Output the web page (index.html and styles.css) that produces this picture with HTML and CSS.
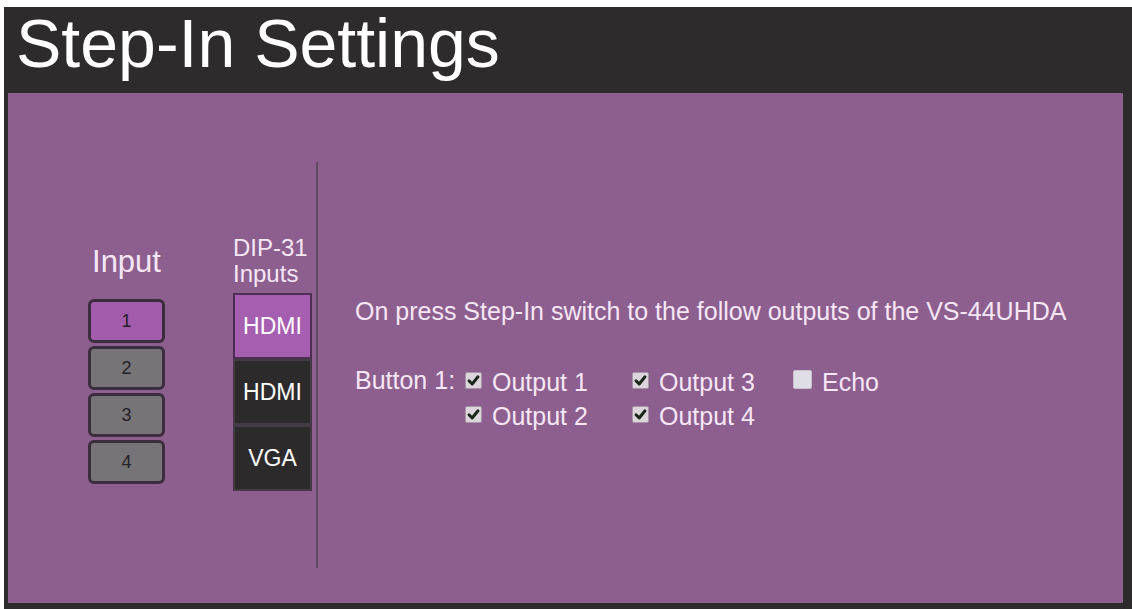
FILE: index.html
```html
<!DOCTYPE html>
<html>
<head>
<meta charset="utf-8">
<title>Step-In Settings</title>
<link rel="stylesheet" href="styles.css">
</head>
<body>
<div class="frame">
  <header class="title">Step-In Settings</header>
  <main class="panel">
    <div class="input-col">
      <div class="input-label">Input</div>
      <div class="in-btn active">1</div>
      <div class="in-btn">2</div>
      <div class="in-btn">3</div>
      <div class="in-btn">4</div>
    </div>
    <div class="dip-col">
      <div class="dip-label">DIP-31<br>Inputs</div>
      <div class="dip-box active">HDMI</div>
      <div class="dip-box">HDMI</div>
      <div class="dip-box">VGA</div>
    </div>
    <div class="divider"></div>
    <div class="content">
      <p class="desc">On press Step-In switch to the follow outputs of the VS-44UHDA</p>
      <div class="opts">
        <span class="blabel">Button 1:</span>
        <span class="opt"><span class="cb"><svg viewBox="0 0 17 17" width="17" height="17"><path d="M4 8.8 L7.2 12 L13 4.8" fill="none" stroke="#1b261c" stroke-width="3" stroke-linecap="round" stroke-linejoin="round"/></svg></span>Output 1</span>
        <span class="opt"><span class="cb"><svg viewBox="0 0 17 17" width="17" height="17"><path d="M4 8.8 L7.2 12 L13 4.8" fill="none" stroke="#1b261c" stroke-width="3" stroke-linecap="round" stroke-linejoin="round"/></svg></span>Output 3</span>
        <span class="opt"><span class="cb empty"></span>Echo</span>
        <span class="blabel"></span>
        <span class="opt"><span class="cb"><svg viewBox="0 0 17 17" width="17" height="17"><path d="M4 8.8 L7.2 12 L13 4.8" fill="none" stroke="#1b261c" stroke-width="3" stroke-linecap="round" stroke-linejoin="round"/></svg></span>Output 2</span>
        <span class="opt"><span class="cb"><svg viewBox="0 0 17 17" width="17" height="17"><path d="M4 8.8 L7.2 12 L13 4.8" fill="none" stroke="#1b261c" stroke-width="3" stroke-linecap="round" stroke-linejoin="round"/></svg></span>Output 4</span>
        <span class="opt"></span>
      </div>
    </div>
  </main>
</div>
</body>
</html>
```

FILE: styles.css
```css
html, body {
  margin: 0;
  padding: 0;
  background: #ffffff;
}

body {
  font-family: "Liberation Sans", Arial, sans-serif;
}

.frame {
  margin: 7px 0 0 4px;
  width: 1128px;
  height: 602px;
  box-sizing: border-box;
  background: #2e2b2c;
  padding: 0 9px 6px 4px;
  display: flex;
  flex-direction: column;
}

.title {
  height: 86px;
  box-sizing: border-box;
  padding: 0 0 14px 8px;
  font-size: 68px;
  line-height: 72px;
  color: #ffffff;
  white-space: nowrap;
}

.panel {
  flex: 1;
  background: #8c5f8e;
  display: flex;
  align-items: flex-start;
  padding-left: 80px;
  color: #f6e6f6;
}

.input-col {
  width: 77px;
  margin-top: 152px;
  display: flex;
  flex-direction: column;
  align-items: stretch;
  gap: 3px;
}

.input-label {
  font-size: 31px;
  line-height: 34px;
  text-align: center;
  margin-bottom: 17px;
  white-space: nowrap;
}

.in-btn {
  height: 44px;
  box-sizing: border-box;
  border: 3px solid #3b2d3d;
  border-radius: 6px;
  background: #767476;
  color: #26202a;
  font-size: 18px;
  display: flex;
  align-items: center;
  justify-content: center;
}

.in-btn.active {
  background: #a35bab;
}

.dip-col {
  width: 79px;
  margin-left: 68px;
  margin-top: 142px;
  display: flex;
  flex-direction: column;
}

.dip-label {
  font-size: 24px;
  line-height: 26px;
  margin-bottom: 6px;
  white-space: nowrap;
}

.dip-box {
  height: 66px;
  box-sizing: border-box;
  background: #2c2a2b;
  border: 2px solid #433a45;
  color: #ffffff;
  font-size: 23px;
  display: flex;
  align-items: center;
  justify-content: center;
}

.dip-box.active {
  background: #a65eb0;
  border-color: #4e2f53;
}

.divider {
  width: 2px;
  height: 406px;
  margin-top: 69px;
  margin-left: 4px;
  background: #5e4862;
}

.content {
  margin-left: 37px;
  margin-top: 204px;
}

.desc {
  margin: 0;
  font-size: 25px;
  line-height: 28px;
  white-space: nowrap;
}

.opts {
  margin-top: 38px;
  display: grid;
  grid-template-columns: 110px 167px 161px auto;
  grid-auto-rows: 34px;
  font-size: 25px;
  line-height: 34px;
}

.blabel {
  white-space: nowrap;
}

.opt {
  white-space: nowrap;
  position: relative;
  top: 2px;
}

.cb {
  display: inline-block;
  width: 17px;
  height: 17px;
  box-sizing: border-box;
  margin-right: 10px;
  background: #dcd6dc;
  border: 1px solid #a796a8;
  border-radius: 2px;
  vertical-align: 2px;
  overflow: hidden;
}

.cb svg {
  display: block;
  margin: -1px 0 0 -1px;
}

.cb.empty {
  width: 19px;
  height: 19px;
  background: #dfdde6;
  border-color: #c9c2cc;
}
```
